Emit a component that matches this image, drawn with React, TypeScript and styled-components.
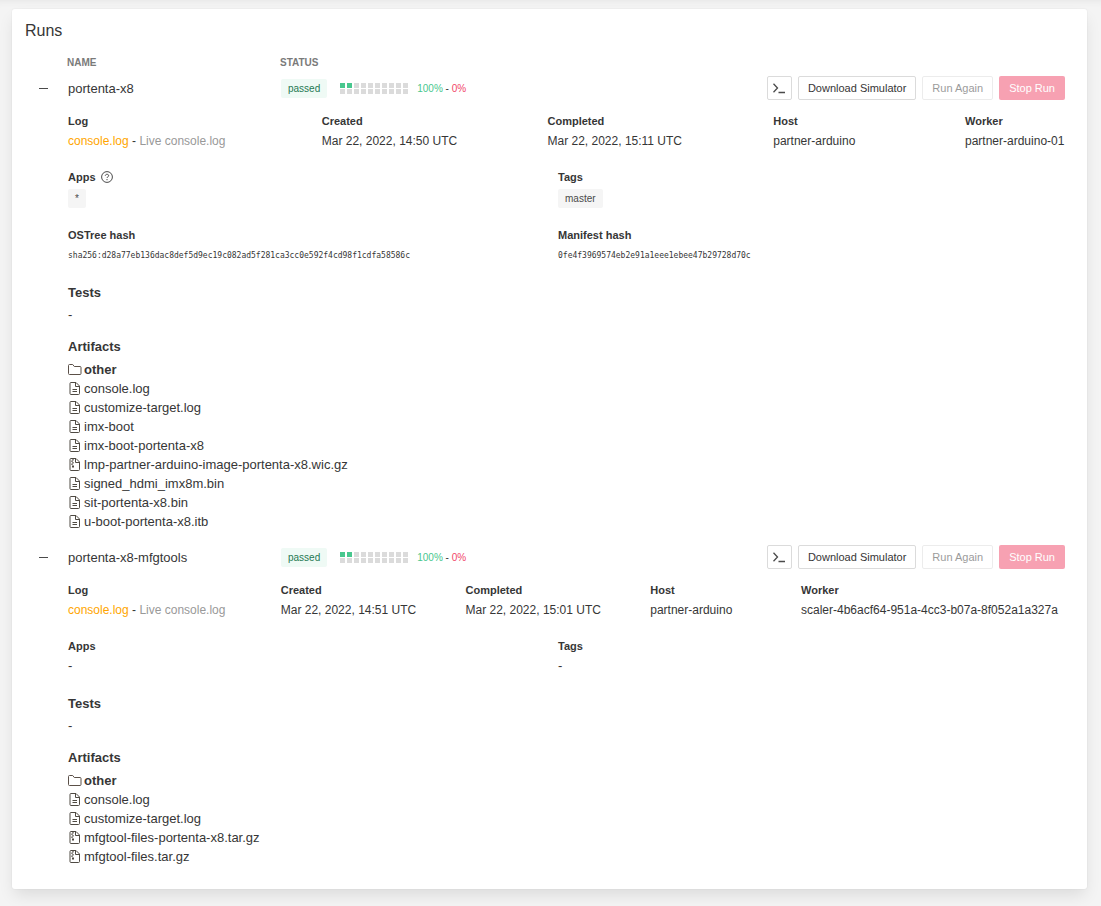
import React, { useState } from "react";
import styled, { createGlobalStyle } from "styled-components";

const GlobalStyle = createGlobalStyle`
  * { box-sizing: border-box; }
  body {
    margin: 0;
    background: #f4f4f4;
    color: #363636;
    font: 13px/20px "Liberation Sans", Arial, sans-serif;
  }
`;

const Page = styled.main`
  padding: 9px 14px 17px 12px;
  box-shadow: inset 0 8px 8px -8px rgba(10, 10, 10, 0.08);
`;

const Card = styled.section`
  padding: 10px 19px 14px 13px;
  background: #fff;
  border-radius: 3px;
  box-shadow: 0 8px 16px -2px rgba(10, 10, 10, 0.1), 0 0 0 1px rgba(10, 10, 10, 0.02);
`;

const Title = styled.h1`
  margin: 0;
  font-size: 16px;
  line-height: 24px;
  font-weight: 400;
`;

const RunsTable = styled.table`
  width: 100%;
  table-layout: fixed;
  border-collapse: collapse;
`;

const HeadCell = styled.th<{ $width?: number }>`
  width: ${(p) => (p.$width ? `${p.$width}px` : "auto")};
  padding: 12px 0 0;
  text-align: left;
  font-size: 10px;
  line-height: 16px;
  color: #7a7a7a;
  text-transform: uppercase;
`;

const Cell = styled.td`
  padding: 5px 0 0;
  height: 29px;
  vertical-align: middle;
`;

const NameCell = styled(Cell)`
  padding: 7px 0 0 1px;
`;

const Toggle = styled.button`
  display: flex;
  align-items: center;
  justify-content: center;
  width: 18px;
  height: 24px;
  margin-left: 9px;
  padding: 0;
  border: 0;
  background: none;
  cursor: pointer;

  &::before {
    content: "";
    width: 9px;
    height: 1px;
    background: #4a4a4a;
  }
`;

const Status = styled.div`
  display: flex;
  align-items: center;
  padding-left: 1px;
  font-size: 10px;
`;

const Badge = styled.span`
  padding: 0 7px;
  margin-right: 13px;
  border-radius: 2px;
  background: #effaf5;
  color: #257953;
  line-height: 19px;
`;

const Meter = styled.div`
  display: grid;
  grid-template-columns: repeat(10, 5px);
  gap: 1px 2px;
  margin-right: 9px;
`;

const Dot = styled.i<{ $on: boolean }>`
  height: 5px;
  background: ${(p) => (p.$on ? "#48c78e" : "#dbdbdb")};
`;

const Rates = styled.span`
  line-height: 19px;
`;

const Pass = styled.span`
  color: #48c78e;
`;

const Fail = styled.span`
  color: #f14668;
`;

const Actions = styled.div`
  display: flex;
  justify-content: flex-end;
  gap: 6px;
  padding-right: 3px;
`;

const Button = styled.button<{ $danger?: boolean }>`
  display: inline-flex;
  align-items: center;
  height: 24px;
  padding: 0 ${(p) => (p.$danger ? 10 : 9)}px;
  border: ${(p) => (p.$danger ? "0" : "1px solid #dbdbdb")};
  border-radius: 2px;
  background: ${(p) => (p.$danger ? "#f14668" : "#fff")};
  color: ${(p) => (p.$danger ? "#fff" : "#363636")};
  font: 11px/16px "Liberation Sans", Arial, sans-serif;
  white-space: nowrap;

  &:disabled {
    opacity: 0.5;
  }
`;

const IconButton = styled(Button)`
  width: 25px;
  padding: 0;
  justify-content: center;
`;

const Details = styled.td`
  padding: 11px 0 9px 1px;
`;

const Summary = styled.dl`
  display: flex;
  justify-content: space-between;
  margin: 0 0 16px;
  font-size: 12px;
`;

const Field = styled.div<{ $width?: number }>`
  min-width: ${(p) => p.$width ?? 136}px;
  white-space: nowrap;
`;

const Pair = styled.dl`
  display: grid;
  grid-template-columns: 49% 51%;
  margin: 0 0 16px;
`;

const Label = styled.dt`
  display: flex;
  align-items: center;
  gap: 5px;
  font-size: 11px;
  font-weight: 700;
`;

const Value = styled.dd`
  margin: 0;
`;

const PairValue = styled(Value)`
  min-height: 21px;
`;

const TagValue = styled(Value)`
  display: flex;
  padding: 2px 0 1px;
`;

const Hash = styled(PairValue)`
  font: 8px/21px "DejaVu Sans Mono", monospace;
`;

const Tag = styled.span`
  padding: 0 7px;
  border-radius: 2px;
  background: #f5f5f5;
  color: #4a4a4a;
  font-size: 10px;
  line-height: 19px;
`;

const LogLink = styled.a`
  color: #ffa500;
  text-decoration: none;
`;

const LiveLink = styled(LogLink)`
  color: #999;
`;

const Heading = styled.h2`
  margin: 0;
  font-size: 13px;
  line-height: 22px;
`;

const Empty = styled.p`
  margin: 1px 0 11px;
`;

const Files = styled.ul`
  margin: 2px 0 0;
  padding: 0;
  list-style: none;
  line-height: 19px;
`;

const FileRow = styled.li<{ $folder?: boolean }>`
  display: flex;
  align-items: center;
  gap: 2px;
  font-weight: ${(p) => (p.$folder ? 700 : 400)};
`;

const FileLink = styled.a`
  color: inherit;
  text-decoration: none;
`;

const FolderIcon = () => (
  <svg width="14" height="15" viewBox="0 0 14 15" fill="none" stroke="#5b5048">
    <path d="M.5 3.5a1 1 0 0 1 1-1h3.2l1.6 2H12a1 1 0 0 1 1 1v6a1 1 0 0 1-1 1H1.5a1 1 0 0 1-1-1z" />
  </svg>
);

const FileIcon = () => (
  <svg width="14" height="15" viewBox="0 0 14 15" fill="none" stroke="#4f4a43">
    <path d="M3 1.5h5l3.5 3.5v7.5a1 1 0 0 1-1 1H3a1 1 0 0 1-1-1v-10a1 1 0 0 1 1-1zM7.5 1.5v4h4" />
    <path d="M4.5 8.5h4.5M4.5 10.5h4.5" strokeWidth="1.2" />
  </svg>
);

const ArchiveIcon = () => (
  <svg width="14" height="15" viewBox="0 0 14 15" fill="none" stroke="#4f4a43">
    <path d="M3 1.5h5l3.5 3.5v7.5a1 1 0 0 1-1 1H3a1 1 0 0 1-1-1v-10a1 1 0 0 1 1-1zM7.5 1.5v4h4" />
    <path d="M5 2v1.5M4 3.5v1.5M5 5v1.5M4 6.5v1.5" strokeWidth="1.2" />
    <path d="M4 9.5h2" strokeWidth="2" />
  </svg>
);

const HelpIcon = () => (
  <svg width="12" height="12" viewBox="0 0 12 12" fill="none" stroke="#4a4a4a">
    <circle cx="6" cy="6" r="5.4" />
    <path d="M4.3 4.8C4.3 2.8 7.7 2.8 7.7 4.7 7.7 5.9 6 5.8 6 7M6 8v1.2" />
  </svg>
);

const TerminalIcon = () => (
  <svg width="14" height="14" viewBox="0 0 14 14" fill="none" stroke="#4a4a4a" strokeWidth="1.3">
    <path d="M1.5 2.8l4 4.2-4 4.2M6.5 11.5h6.5" />
  </svg>
);

interface Run {
  name: string;
  created: string;
  completed: string;
  worker: string;
  workerWidth: number;
  apps?: string;
  tags?: string;
  hashes?: [string, string];
  files: string[];
}

const runs: Run[] = [
  {
    name: "portenta-x8",
    created: "Mar 22, 2022, 14:50 UTC",
    completed: "Mar 22, 2022, 15:11 UTC",
    worker: "partner-arduino-01",
    workerWidth: 103,
    apps: "*",
    tags: "master",
    hashes: [
      "sha256:d28a77eb136dac8def5d9ec19c082ad5f281ca3cc0e592f4cd98f1cdfa58586c",
      "0fe4f3969574eb2e91a1eee1ebee47b29728d70c",
    ],
    files: [
      "console.log",
      "customize-target.log",
      "imx-boot",
      "imx-boot-portenta-x8",
      "lmp-partner-arduino-image-portenta-x8.wic.gz",
      "signed_hdmi_imx8m.bin",
      "sit-portenta-x8.bin",
      "u-boot-portenta-x8.itb",
    ],
  },
  {
    name: "portenta-x8-mfgtools",
    created: "Mar 22, 2022, 14:51 UTC",
    completed: "Mar 22, 2022, 15:01 UTC",
    worker: "scaler-4b6acf64-951a-4cc3-b07a-8f052a1a327a",
    workerWidth: 267,
    files: [
      "console.log",
      "customize-target.log",
      "mfgtool-files-portenta-x8.tar.gz",
      "mfgtool-files.tar.gz",
    ],
  },
];

const TagField = ({ label, value, help }: { label: string; value?: string; help?: boolean }) => (
  <div>
    <Label>
      {label}
      {help && <HelpIcon />}
    </Label>
    {value ? (
      <TagValue>
        <Tag>{value}</Tag>
      </TagValue>
    ) : (
      <PairValue>-</PairValue>
    )}
  </div>
);

const RunDetails = ({ run }: { run: Run }) => (
  <>
    <Summary>
      <Field $width={164}>
        <Label>Log</Label>
        <Value>
          <LogLink href="#log">console.log</LogLink> - <LiveLink href="#live">Live console.log</LiveLink>
        </Value>
      </Field>
      <Field>
        <Label>Created</Label>
        <Value>{run.created}</Value>
      </Field>
      <Field>
        <Label>Completed</Label>
        <Value>{run.completed}</Value>
      </Field>
      <Field $width={102}>
        <Label>Host</Label>
        <Value>partner-arduino</Value>
      </Field>
      <Field $width={run.workerWidth}>
        <Label>Worker</Label>
        <Value>{run.worker}</Value>
      </Field>
    </Summary>
    <Pair>
      <TagField label="Apps" value={run.apps} help={!!run.apps} />
      <TagField label="Tags" value={run.tags} />
    </Pair>
    {run.hashes && (
      <Pair>
        <div>
          <Label>OSTree hash</Label>
          <Hash>{run.hashes[0]}</Hash>
        </div>
        <div>
          <Label>Manifest hash</Label>
          <Hash>{run.hashes[1]}</Hash>
        </div>
      </Pair>
    )}
    <Heading>Tests</Heading>
    <Empty>-</Empty>
    <Heading>Artifacts</Heading>
    <Files>
      <FileRow $folder>
        <FolderIcon />
        other
      </FileRow>
      {run.files.map((file) => (
        <FileRow key={file}>
          {file.endsWith(".gz") ? <ArchiveIcon /> : <FileIcon />}
          <FileLink href="#file">{file}</FileLink>
        </FileRow>
      ))}
    </Files>
  </>
);

const RunGroup = ({ run }: { run: Run }) => {
  const [open, setOpen] = useState(true);
  return (
    <tbody>
      <tr>
        <Cell>
          <Toggle aria-label="Toggle details" aria-expanded={open} onClick={() => setOpen(!open)} />
        </Cell>
        <NameCell>{run.name}</NameCell>
        <Cell>
          <Status>
            <Badge>passed</Badge>
            <Meter>
              {Array.from({ length: 20 }, (_, i) => (
                <Dot key={i} $on={i % 10 < 2 && i < 10} />
              ))}
            </Meter>
            <Rates>
              <Pass>100%</Pass> - <Fail>0%</Fail>
            </Rates>
          </Status>
        </Cell>
        <Cell>
          <Actions>
            <IconButton aria-label="Open console">
              <TerminalIcon />
            </IconButton>
            <Button>Download Simulator</Button>
            <Button disabled>Run Again</Button>
            <Button $danger disabled>
              Stop Run
            </Button>
          </Actions>
        </Cell>
      </tr>
      {open && (
        <tr>
          <td />
          <Details colSpan={3}>
            <RunDetails run={run} />
          </Details>
        </tr>
      )}
    </tbody>
  );
};

export default function App() {
  return (
    <Page>
      <GlobalStyle />
      <Card>
        <Title>Runs</Title>
        <RunsTable>
          <thead>
            <tr>
              <HeadCell $width={42} />
              <HeadCell $width={213}>Name</HeadCell>
              <HeadCell>Status</HeadCell>
              <HeadCell />
            </tr>
          </thead>
          {runs.map((run) => (
            <RunGroup key={run.name} run={run} />
          ))}
        </RunsTable>
      </Card>
    </Page>
  );
}
